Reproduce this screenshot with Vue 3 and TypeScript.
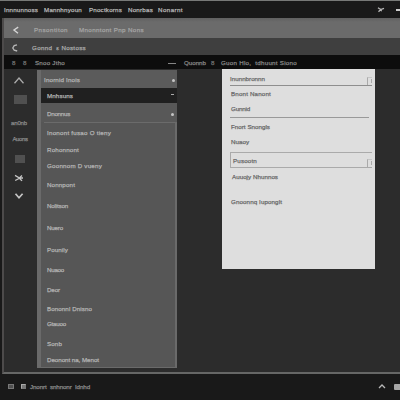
<script setup lang="ts">
import type { Directive } from 'vue'

interface Entry {
  text: string
  width: number
  gap: number
}

// Spreads a label's letters so that it fills its column width.
const vFit: Directive<HTMLElement, number> = {
  mounted(el, binding) {
    const natural = el.getBoundingClientRect().width
    const count = (el.textContent ?? '').length
    el.style.letterSpacing = `${(binding.value - natural) / count}px`
  },
}

const menus: Entry[] = [
  { text: 'Innnunnoss', width: 34, gap: 4 },
  { text: 'Mannhnyoun', width: 38, gap: 6 },
  { text: 'Pnoctkorns', width: 33, gap: 7 },
  { text: 'Nonrbas', width: 25, gap: 6 },
  { text: 'Nonarnt', width: 25, gap: 5 },
]

const entries: Entry[] = [
  { text: 'Inonont fusao O tieny', width: 64, gap: 5 },
  { text: 'Rohonnont', width: 32, gap: 7 },
  { text: 'Goonnom D vueny', width: 55, gap: 6 },
  { text: 'Nonnpont', width: 28, gap: 9 },
  { text: 'Nolitson', width: 21, gap: 11 },
  { text: 'Nuero', width: 16, gap: 12 },
  { text: 'Pounily', width: 21, gap: 12 },
  { text: 'Nuaoo', width: 17, gap: 10 },
  { text: 'Deor', width: 13, gap: 10 },
  { text: 'Bononnl Dnisno', width: 45, gap: 9 },
  { text: 'Gtauoo', width: 19, gap: 5 },
  { text: 'Sonb', width: 15, gap: 10 },
  { text: 'Deonont na, Menot', width: 52, gap: 6 },
]
</script>

<template>
  <div class="app">
    <header class="menubar">
      <span v-for="m in menus" :key="m.text" v-fit="m.width" :style="{ marginLeft: m.gap + 'px' }">{{ m.text }}</span>
      <svg class="pin" width="8" height="8" viewBox="0 0 8 8"><path d="M1 1.8 3.7 3.6 7 2.4M1.5 5.8 3.7 3.6 4.6 5.2" /></svg>
      <i class="minimise"></i>
    </header>

    <div class="window">
      <div class="toolbar">
        <svg width="8" height="10" viewBox="0 0 8 10"><path d="M6.2 2.2 2 5l4 3.2" /></svg>
        <span v-fit="34" class="t1">Pnsontiton</span>
        <span v-fit="65" class="t2">Mnonntont Pnp Nons</span>
      </div>
      <div class="subbar">
        <svg width="8" height="10" viewBox="0 0 8 10"><path d="M6 1.8 3.2 2.6 1.8 5 3.2 7.2 6.2 8" /></svg>
        <span v-fit="54">Gonnd&nbsp; ε Nostoss</span>
      </div>
      <div class="tabs">
        <span class="mark">8</span><span class="mark second">8</span>
        <span v-fit="30" class="left-tab">Snoo Jtho</span>
        <i class="dash"></i>
        <span v-fit="22">Quonnb</span>
        <span class="mark third">8</span>
        <span v-fit="76" class="main-tab">Guon Hlo, &nbsp;tdhuunt Siono</span>
      </div>

      <div class="body">
        <aside class="rail">
          <svg width="12" height="9" viewBox="0 0 12 9"><path d="M1.5 7.2 6 2l4.5 5.2" /></svg>
          <i class="block"></i>
          <span v-fit="16" class="r1">an0nb</span>
          <span v-fit="15" class="r2">Auons</span>
          <i class="block small"></i>
          <svg class="cross" width="10" height="8" viewBox="0 0 10 8"><path d="M1 1.3Q5 3 8 6.8M1.2 6.5 4.5 4.8 8 1.6M5.5 4H9" /></svg>
          <svg class="down" width="10" height="8" viewBox="0 0 10 8"><path d="m1.5 1.8 3.5 4 3.6-4" /></svg>
        </aside>

        <section class="panel">
          <div class="head"><span v-fit="36">Inornid Inois</span><i class="dot"></i></div>
          <div class="head selected"><span v-fit="26">Mnhsuns</span><i class="tick"></i></div>
          <div class="head sub"><span v-fit="23">Dnonnus</span><i class="dot"></i></div>
          <ul>
            <li v-for="e in entries" :key="e.text" :style="{ marginTop: e.gap + 'px' }">
              <span v-fit="e.width">{{ e.text }}</span>
            </li>
          </ul>
        </section>

        <main class="card">
          <div class="field"><span v-fit="35">Inunnbronnn</span><i class="knob"></i></div>
          <p class="p1"><span v-fit="40">Bnont Nanont</span></p>
          <p class="p2"><span v-fit="19">Gunnid</span></p>
          <hr />
          <p class="p3"><span v-fit="39">Fnort Snongls</span></p>
          <p class="p4"><span v-fit="18">Nuaoy</span></p>
          <div class="field boxed"><span v-fit="24">Pusootn</span><i class="knob"></i></div>
          <p class="p5"><span v-fit="46">Auuojy Nhunnos</span></p>
          <p class="p6"><span v-fit="51">Gnoonnq Iuponglt</span></p>
        </main>
      </div>
    </div>

    <footer class="status">
      <i class="s-box"></i><i class="s-box flag"></i>
      <span v-fit="60">Jnonrt &nbsp;snhnonr &nbsp;Idnhd</span>
      <svg width="8" height="7" viewBox="0 0 8 7"><path d="M1 5 4 2l3 3" /></svg>
      <i class="clip"></i>
    </footer>
  </div>
</template>

<style>
body {
  background: #191919;
  overflow: hidden;
}
</style>

<style scoped>
* {
  box-sizing: border-box;
}
.app {
  width: 400px;
  height: 400px;
  display: flex;
  flex-direction: column;
  overflow: hidden;
  background: #191919;
  border-top: 1px solid #777977;
  font: 6.2px/10px "Liberation Sans", sans-serif;
  color: #aaa;
}
span {
  display: inline-block;
  white-space: pre;
  flex: none;
  -webkit-text-stroke: 0.25px currentColor;
}
i {
  display: block;
  flex: none;
}
svg {
  display: block;
  flex: none;
  fill: none;
  stroke: #b8b8b8;
  stroke-width: 1.3;
}
.menubar {
  height: 17px;
  flex: none;
  display: flex;
  align-items: center;
  padding-top: 1px;
  color: #b7b7b7;
}
.pin {
  margin-left: auto;
}
.minimise {
  width: 4px;
  height: 2px;
  margin-left: 11px;
  background: #ccc;
}
.window {
  height: 356px;
  flex: none;
  border-left: 2px solid #4d4b4b;
  border-bottom: 2px solid #666766;
  margin-left: 2px;
}
.toolbar {
  height: 20px;
  display: flex;
  align-items: center;
  padding: 3px 0 0 8px;
  background: linear-gradient(#606060, #6b6b6b 20%, #6b6b6b);
  color: #a4a4a4;
}
.toolbar svg {
  stroke: #d5d5d5;
  stroke-width: 1.4;
}
.t1 {
  margin-left: 14px;
}
.t2 {
  margin-left: 11px;
}
.subbar {
  height: 17px;
  display: flex;
  align-items: center;
  padding: 2px 0 0 7px;
  background: #3f3f3f;
}
.subbar span {
  margin-left: 13px;
}
.tabs {
  height: 14px;
  display: flex;
  align-items: center;
  padding: 2px 0 0 8px;
  background: #0d0d0d;
  color: #858585;
}
.mark {
  width: 4px;
  color: #727272;
}
.second {
  margin-left: 7px;
}
.left-tab {
  margin-left: 8px;
}
.dash {
  width: 8px;
  height: 1px;
  margin: 0 8px 0 103px;
  background: #858585;
}
.third {
  margin-left: 5px;
}
.main-tab {
  margin-left: 6px;
}
.body {
  height: 303px;
  display: flex;
  background: #2c2c2c;
}
.rail {
  width: 33px;
  flex: none;
  padding-top: 7px;
  display: flex;
  flex-direction: column;
  align-items: center;
  color: #8b8b8b;
  font-size: 6px;
}
.rail svg {
  margin-right: 3px;
  stroke: #aaa;
}
.block {
  width: 13px;
  height: 9px;
  margin: 10px 1px 0 0;
  background: #505050;
}
.r1 {
  margin: 14px 3px 0 0;
}
.r2 {
  margin-top: 6px;
  margin-right: 1px;
}
.block.small {
  width: 10px;
  height: 8px;
  margin: 11px 2px 0 0;
}
.rail .cross {
  margin-top: 11px;
  stroke: #c5c5c5;
}
.rail .down {
  margin-top: 10px;
  stroke: #c5c5c5;
  stroke-width: 1.7;
}
.panel {
  width: 140px;
  height: 298px;
  flex: none;
  margin-top: 1px;
  display: flex;
  flex-direction: column;
  background: #565656;
  border: solid #6a6a6a;
  border-width: 0 2px 1px 4px;
  color: #b3b3b3;
}
.head {
  height: 18px;
  flex: none;
  display: flex;
  align-items: center;
  justify-content: space-between;
  padding: 2px 2px 0 3px;
  background: #5b5b5b;
  margin-right: -2px;
}
.selected {
  height: 15px;
  padding: 1px 3px 0 6px;
  background: #202020;
}
.sub {
  height: 19px;
  padding: 3px 3px 0 6px;
  background: #585858;
}
.dot {
  width: 3px;
  height: 3px;
  border-radius: 50%;
  background: #c5c5c5;
}
.tick {
  width: 3px;
  height: 1px;
  margin-bottom: 3px;
  background: #aaa;
}
ul {
  list-style: none;
  margin: 0 0 0 3px;
  padding: 0 0 0 3px;
  border-top: 1px solid #6b6b6b;
}
li {
  height: 10px;
}
.card {
  width: 153px;
  height: 200px;
  flex: none;
  margin-left: 45px;
  padding: 5px 3px 0 8px;
  background: #dedede;
  color: #6a6a6a;
}
.field {
  height: 12px;
  display: flex;
  justify-content: space-between;
  border-bottom: 1px solid #8e8e8e;
}
.knob {
  width: 5px;
  height: 8px;
  margin-top: 3px;
  border-left: 1px solid #aaa;
  border-top: 1px solid #c6c6c6;
  background: linear-gradient(#aaa, #aaa) 3px 1px / 1px 4px no-repeat;
}
.card p {
  height: 10px;
  margin: 0 0 0 1px;
}
.card .p1 {
  margin-top: 3px;
}
.card .p2,
.card .p4 {
  margin-top: 5px;
}
hr {
  height: 1px;
  border: 0;
  margin: 3px 3px 0 0;
  background: #999;
}
.card .p3 {
  margin-top: 4px;
}
.field.boxed {
  height: 16px;
  margin-top: 5px;
  padding: 3px 0 0 2px;
  border: 1px solid #aaa;
  border-right: 0;
}
.card .p5 {
  margin-top: 4px;
  padding-left: 1px;
}
.card .p6 {
  margin-top: 15px;
}
.status {
  flex: 1;
  display: flex;
  align-items: center;
  padding: 0 0 1px 8px;
  color: #8a8a8a;
}
.s-box {
  width: 6px;
  height: 5px;
  border: 1px solid #777;
  background: #505050;
}
.flag {
  width: 5px;
  margin-left: 7px;
  border-color: #aaa #777 #777 #aaa;
  background: #777;
}
.status span {
  margin-left: 4px;
}
.status svg {
  margin-left: auto;
}
.clip {
  width: 6px;
  height: 6px;
  margin-left: 8px;
  border-radius: 1px 0 0 1px;
  background: #a7a7a7;
}
</style>
